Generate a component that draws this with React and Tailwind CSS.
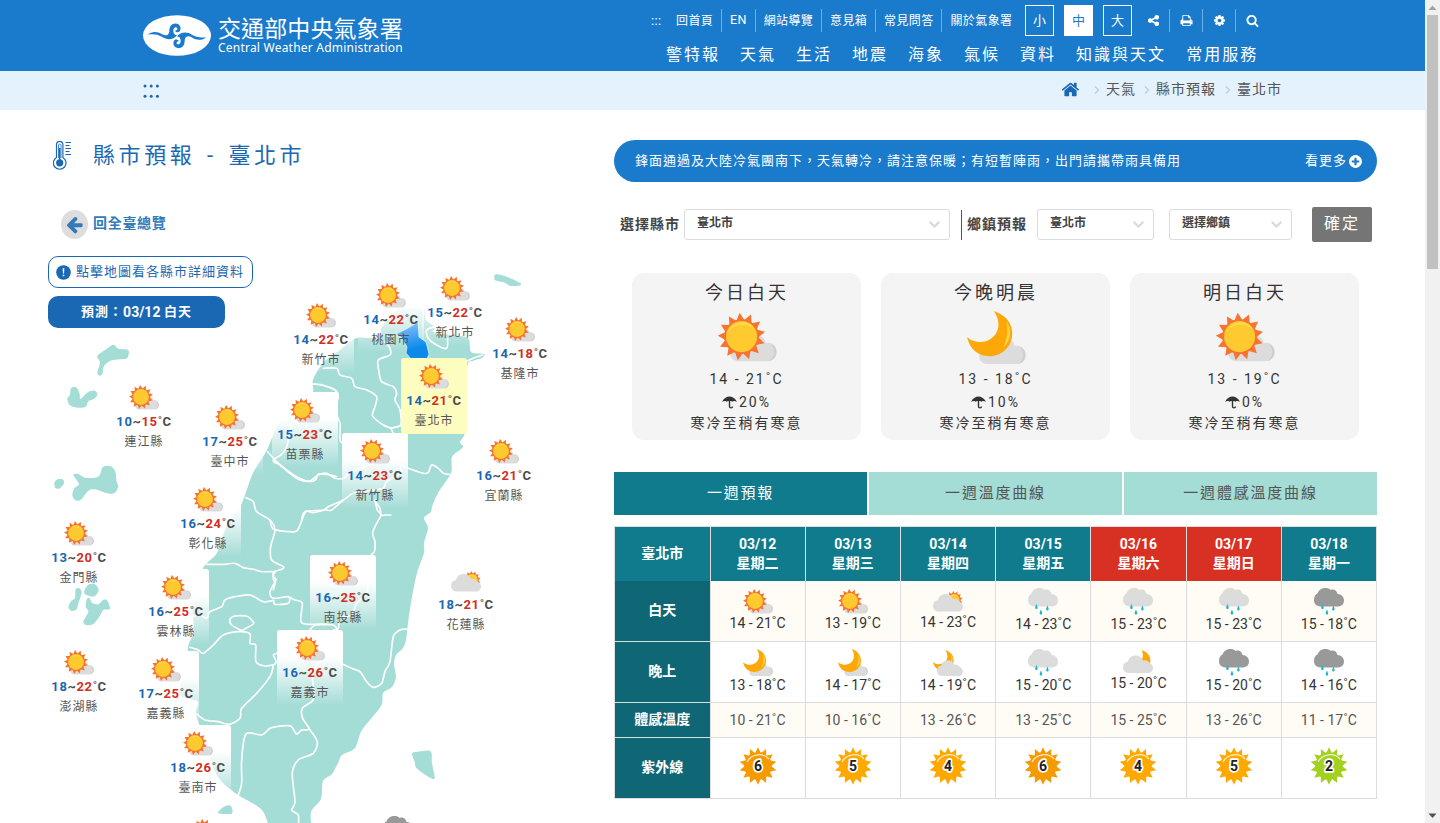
import React from 'react';
import { FiChevronDown } from 'react-icons/fi';

const ICONS = {
  share: 'M1344 1024q133 0 226.5 93.5t93.5 226.5-93.5 226.5-226.5 93.5-226.5-93.5-93.5-226.5q0-12 2-34l-360-180q-92 86-218 86-133 0-226.5-93.5t-93.5-226.5 93.5-226.5 226.5-93.5q126 0 218 86l360-180q-2-22-2-34 0-133 93.5-226.5t226.5-93.5 226.5 93.5 93.5 226.5-93.5 226.5-226.5 93.5q-126 0-218-86l-360 180q2 22 2 34t-2 34l360 180q92-86 218-86z',
  print: 'M448 1536h896v-256h-896v256zm0-640h896v-384h-160q-40 0-68-28t-28-68v-160h-640v640zm1152 64q0-26-19-45t-45-19-45 19-19 45 19 45 45 19 45-19 19-45zm128 0v416q0 13-9.5 22.5t-22.5 9.5h-224v160q0 40-28 68t-68 28h-960q-40 0-68-28t-28-68v-160h-224q-13 0-22.5-9.5t-9.5-22.5v-416q0-79 56.5-135.5t135.5-56.5h64v-544q0-40 28-68t68-28h672q40 0 88 20t76 48l152 152q28 28 48 76t20 88v256h64q79 0 135.5 56.5t56.5 135.5z',
  cog: 'M1152 896q0-106-75-181t-181-75-181 75-75 181 75 181 181 75 181-75 75-181zm512-109v222q0 12-8 23t-20 13l-185 28q-19 54-39 91 35 50 107 138 10 12 10 25t-9 23q-27 37-99 108t-94 71q-12 0-26-9l-138-108q-44 23-91 38-16 136-29 186-7 28-36 28h-222q-14 0-24.5-8.5t-11.5-21.5l-28-184q-49-16-90-37l-141 107q-10 9-25 9-14 0-25-11-126-114-165-168-7-10-7-23 0-12 8-23 15-21 51-66.5t54-70.5q-27-50-41-99l-183-27q-13-2-21-12.5t-8-23.5v-222q0-12 8-23t19-13l186-28q14-46 39-92-40-57-107-138-10-12-10-24 0-10 9-23 26-36 98.5-107.5t94.5-71.5q13 0 26 10l138 107q44-23 91-38 16-136 29-186 7-28 36-28h222q14 0 24.5 8.5t11.5 21.5l28 184q49 16 90 37l142-107q9-9 24-9 13 0 25 10 129 119 165 170 7 8 7 22 0 12-8 23-15 21-51 66.5t-54 70.5q26 50 41 98l183 28q13 2 21 12.5t8 23.5z',
  search: 'M1216 832q0-185-131.5-316.5t-316.5-131.5-316.5 131.5-131.5 316.5 131.5 316.5 316.5 131.5 316.5-131.5 131.5-316.5zm512 832q0 52-38 90t-90 38q-54 0-90-38l-343-342q-179 124-399 124-143 0-273.5-55.5t-225-150-150-225-55.5-273.5 55.5-273.5 150-225 225-150 273.5-55.5 273.5 55.5 225 150 150 225 55.5 273.5q0 220-124 399l343 343q37 37 37 90z',
  arrow: 'M1664 896v128q0 53-32.5 90.5t-84.5 37.5h-704l293 294q38 36 38 90t-38 90l-75 76q-37 37-90 37-52 0-91-37l-651-652q-37-37-37-90 0-52 37-91l651-650q38-38 91-38 52 0 90 38l75 74q38 38 38 91t-38 91l-293 293h704q52 0 84.5 37.5t32.5 90.5z',
  home: 'M1472 992v480q0 26-19 45t-45 19h-384v-384h-256v384h-384q-26 0-45-19t-19-45v-480q0-1 .5-3t.5-3l575-474 575 474q1 2 1 6zm223-69l-62 74q-8 9-21 11h-3q-13 0-21-7l-692-577-692 577q-12 8-24 7-13-2-21-11l-62-74q-8-10-7-23.5t11-21.5l719-599q32-26 76-26t76 26l244 204v-195q0-14 9-23t23-9h192q14 0 23 9t9 23v408l219 182q10 8 11 21.5t-7 23.5z',
  plus: 'M1344 960v-128q0-26-19-45t-45-19h-256v-256q0-26-19-45t-45-19h-128q-26 0-45 19t-19 45v256h-256q-26 0-45 19t-19 45v128q0 26 19 45t45 19h256v256q0 26 19 45t45 19h128q26 0 45-19t19-45v-256h256q26 0 45-19t19-45zm320-64q0 209-103 385.5t-279.5 279.5-385.5 103-385.5-103-279.5-279.5-103-385.5 103-385.5 279.5-279.5 385.5-103 385.5 103 279.5 279.5 103 385.5z',
};

const Icon = ({ name, className }) => (
  <svg viewBox="0 0 1792 1792" fill="currentColor" className={className}>
    <path d={ICONS[name]} />
  </svg>
);

const star = (cx, cy, inner, outer, n, rot = 0) => {
  const pts = [];
  for (let i = 0; i < n * 2; i++) {
    const r = i % 2 ? inner : outer;
    const a = (Math.PI * i) / n - Math.PI / 2 + rot;
    pts.push(`${(cx + r * Math.cos(a)).toFixed(2)},${(cy + r * Math.sin(a)).toFixed(2)}`);
  }
  return pts.join(' ');
};

// Closed or open Catmull-Rom curve through "x,y x,y ..." points.
const curve = (str, closed) => {
  const p = str.trim().split(/\s+/).map((s) => s.split(',').map(Number));
  const n = p.length;
  const at = (i) => (closed ? p[(i + n) % n] : p[Math.max(0, Math.min(n - 1, i))]);
  let d = `M${p[0][0]} ${p[0][1]}`;
  for (let i = 0; i < (closed ? n : n - 1); i++) {
    const [a, b, c, e] = [at(i - 1), at(i), at(i + 1), at(i + 2)];
    const k = 7;
    d += `C${b[0] + (c[0] - a[0]) / k} ${b[1] + (c[1] - a[1]) / k} ${c[0] - (e[0] - b[0]) / k} ${c[1] - (e[1] - b[1]) / k} ${c[0]} ${c[1]}`;
  }
  return closed ? d + 'Z' : d;
};

const SunShape = () => (
  <>
    <polygon points={star(24, 24, 17, 24.3, 13, -0.08)} fill="#f77330" />
    <circle cx="24" cy="24" r="17.6" fill="#f77330" />
    <circle cx="24" cy="24" r="15.8" fill="#ffca30" />
    <path d="M10.5 20C14 8 32 6 37 17C30 9 16 10 10.5 20Z" fill="#ffda50" />
  </>
);
const SmallCloud = ({ y = 0 }) => (
  <g transform={`translate(0 ${y})`}>
    <path d="M20 49a8 8 0 0 1-7-11C15 32 27 22 38 23C45 22 48 27 48.5 30.500C56 29 59.500 34 59.500 39.500C59.500 45 56 49 50 49Z" fill="#dcdcdc" />
    <path d="M54 32C59 37 58 45 52 48.700C57 48 59.500 44.500 59.500 39.500C59.500 36 57.500 33 54 32Z" fill="#cfcfcf" />
  </g>
);
const Moon = () => (
  <>
    <path d="M27.300 0C39 4 46 12 46 23C46 36 36 46 23 46C11 46 3 39 0 26.500C5 31 10 31.500 14 31.500C26 31 32 22 32 14C32 8 30 4 27.300 0Z" fill="#fba808" />
    <path d="M40 10C46 19 45 30 37 37C41 29 42 19 40 10Z" fill="#ffd44a" />
  </>
);
const BigCloud = ({ fill = '#dcdcdc' }) => (
  <path d="M12 41C4 41 0 36 0 29.500C0 23 4 19 10 18C12 10 18 6 25 6C33 6 38 10 40 16C45 14 51 17 53 21C58 23 60 27 60 31C60 37 56 41 50 41Z" fill={fill} />
);

const Weather = ({ kind, className }) => {
  if (kind === 'sun')
    return <svg viewBox="0 0 60 50" className={className}><SmallCloud /><SunShape /></svg>;
  if (kind === 'moon')
    return <svg viewBox="0 0 60 54" className={className}><SmallCloud y={5} /><Moon /></svg>;
  if (kind === 'sunCloud')
    return (
      <svg viewBox="0 0 60 42" className={className}>
        <g transform="translate(24 0) scale(.74)"><SunShape /></g>
        <BigCloud />
      </svg>
    );
  if (kind === 'moonCloudy')
    return (
      <svg viewBox="0 0 60 52" className={className}>
        <g transform="scale(.9)"><Moon /></g>
        <g transform="translate(8 15) scale(.86 .9)"><BigCloud /></g>
      </svg>
    );
  if (kind === 'cloudMoon')
    return (
      <svg viewBox="0 0 60 46" className={className}>
        <path d="M37 0C58 6 60 28 46 42L38 18C41 12 40 5 37 0Z" fill="#fba808" />
        <g transform="translate(0 5)"><BigCloud /></g>
      </svg>
    );
  const dark = kind === 'rainDark';
  return (
    <svg viewBox="0 0 60 53" className={className}>
      <path d="M13 37C4 36 0 31 0 24C0 17 3 12 7 11C10 3 16 0 23 0C27 0 31 1 33 4C40 1 46 6 47 12C55 12 60 18 60 25C60 32 56 36 49 37Z" fill={dark ? '#999' : '#dcdcdc'} />
      <g fill="#17b8cf">
        <path d="M17 32C13 40 14 42 17 42S20 39 17 32Z" />
        <path d="M39 35C35 43 36 45 39 45S42 42 39 35Z" />
        <path d="M26 43C22 51 23 53 26 53S29 51 26 43Z" />
      </g>
    </svg>
  );
};

const UV = ({ value }) => {
  const color = value >= 6 ? '#f59a00' : value >= 3 ? '#ffa800' : '#a4d020';
  return (
    <svg viewBox="0 0 38 38" className="h-[38px] w-[38px]">
      <polygon points={star(19, 19, 13, 18.8, 14)} fill={color} />
      <circle cx="19" cy="19" r="13.7" fill={color} />
      <path d="M8 15C12 7 24 5 30 12" fill="none" stroke="#fff" strokeOpacity=".8" strokeWidth="1.2" />
      <text x="19" y="24" textAnchor="middle" fontFamily="Roboto, sans-serif" fontWeight="700" fontSize="14" fill="#222" stroke="#fff" strokeWidth="3.5" strokeLinejoin="round" paintOrder="stroke">{value}</text>
    </svg>
  );
};

const COAST =
  '395,312 404,308 423,309 426,320 435,327 433,332 450,335 468,338 471,352 484,354 482,358 473,361 467,368 466,428 460,442 463,447 452,457 451,473 438,493 432,507 431,512 424,518 428,528 424,543 424,553 417,573 412,597 408,623 406,640 403,648 396,655 394,664 396,677 392,687 383,693 381,706 362,730 355,748 342,755 338,763 332,774 323,781 321,799 311,812 309,835 275,835 262,810 238,795 223,783 215,772 210,757 204,740 199,724 196,713 198,702 190,699 180,695 181,683 188,670 188,647 194,630 192,603 200,590 203,568 217,553 225,530 233,517 242,503 253,473 267,450 278,425 293,415 305,400 313,392 313,380 323,363 340,350 357,338 379,338 382,327';

const ISLANDS = [
  [280, 260, '647,43 680,50 722,70 715,77 690,77 675,68 645,60'],
  [40, 330, '172,78 195,60 220,44 235,56 265,60 262,84 240,88 212,92 192,108 188,130 180,137 172,128 180,98'],
  [40, 330, '82,205 90,195 93,175 108,172 118,188 122,207 143,187 165,182 172,195 160,208 145,214 137,230 112,233 88,224'],
  [40, 330, '43,460 52,448 68,448 72,460 60,475 46,474'],
  [40, 330, '100,435 115,432 135,443 175,440 188,412 210,408 225,422 230,455 235,470 222,490 195,488 165,478 145,482 122,510 105,510 97,495 103,475 117,462'],
  [40, 560, '107,87 120,86 125,100 115,130 110,148 95,153 85,142 92,125 105,115'],
  [40, 560, '133,92 145,74 165,73 176,90 168,105 155,110 135,102'],
  [40, 560, '140,118 148,114 158,130 175,133 190,119 202,122 210,147 190,150 178,170 160,192 138,195 130,185 145,155 137,140'],
  [40, 560, '535,760 545,745 565,736 575,742 575,761'],
  [270, 500, '426,760 445,755 482,754 486,790 494,835 475,830 440,805 434,785'],
];

const BORDERS = [
  [280, 260, '315,245 330,265 330,285 295,300 296,330 305,365 340,380 350,400 345,420 360,450 362,495 335,505 340,520'],
  [280, 260, '130,325 170,325 180,345 215,355 225,380 260,390 290,410 285,440 278,468 310,495 335,505'],
  [280, 260, '98,372 130,376 165,390 175,410 165,450 180,490 182,545 220,555'],
  [280, 260, '335,505 362,497'],
  [280, 260, '465,200 440,210 445,235 470,255 500,265 503,235'],
  [280, 260, '540,312 580,295 608,285'],
  [280, 260, '445,290 430,275 436,245'],
  [40, 330, '683,365 710,395 740,420 770,440 810,455 828,448 835,432 870,435 890,440'],
  [280, 260, '50,385 20,560 -20,600 0,615 30,640 60,660 90,663 115,645 140,640 165,655 190,655 210,640 265,615 330,605 390,627 430,640 445,637 455,615 475,625 490,640 508,643'],
  [280, 260, '65,780 75,755 130,750 145,740 190,720 220,700 280,690 310,685 320,665 360,640 362,625'],
  [280, 260, '285,725 300,745 303,765 315,765 333,765'],
  [270, 500, '315,0 322,30 333,45 320,70 308,100 315,125 313,155 303,168 295,240 290,280 260,310 250,335 235,350 210,350 205,385 190,390'],
  [270, 500, '0,60 12,88 75,95 90,75 107,35 130,38 165,30 185,30 220,0'],
  [40, 330, '618,503 640,515 650,545 690,570 705,600 692,650 695,690 730,710 725,718 705,725 700,745 705,760 700,780'],
  [40, 330, '500,703 550,703 585,700 610,713 640,718 665,725 705,725'],
  [40, 560, '700,35 700,50 708,60 690,95 700,115 745,110 745,130 705,133 700,122 670,125 630,105 585,110 555,120 545,140 510,155 500,175 480,165 455,170'],
  [40, 560, '745,110 765,120 787,130 785,188 850,193 880,195 890,205'],
  [40, 560, '810,210 825,195 860,193'],
  [40, 560, '450,262 475,270 490,280 520,255 550,225 600,215 630,222 630,250 647,255 648,305 675,318 705,312 707,300 700,285 712,280'],
  [40, 560, '605,212 575,195 570,178 585,168 620,168 635,180 640,192 605,212'],
  [40, 560, '700,318 690,350 650,400 605,445 600,475 568,493 535,485 495,480 468,460'],
  [40, 560, '595,705 605,670 605,600 618,522 665,525 690,505 710,500 740,497 755,500 770,522 785,510 808,507 788,475 787,445 820,420 820,380 818,350 835,310 880,290 900,300 905,310 935,325 960,335 980,365 1000,382 1025,370 1035,335 1050,305 1060,230 1080,210 1100,207'],
  [40, 560, '808,507 832,545 820,580 775,600 757,640 765,725 755,750 775,765 775,800'],
];

const CITIES = [
  ['新竹市', 14, 22, 288, 297, 'fade'], ['新北市', 15, 22, 422, 270, 'fade'],
  ['基隆市', 14, 18, 487, 311, 'fade'], ['連江縣', 10, 15, 111, 379, ''], ['臺中市', 17, 25, 197, 399, 'fade'],
  ['苗栗縣', 15, 23, 272, 392, 'fade'], ['新竹縣', 14, 23, 342, 433, 'fade'],
  ['宜蘭縣', 16, 21, 471, 433, 'fade'], ['彰化縣', 16, 24, 175, 481, 'fade'], ['金門縣', 13, 20, 46, 515, ''],
  ['雲林縣', 16, 25, 143, 569, 'fade'], ['南投縣', 16, 25, 310, 555, 'fade'], ['花蓮縣', 18, 21, 433, 562, 'fade', 'sunCloud'],
  ['澎湖縣', 18, 22, 46, 644, ''], ['嘉義縣', 17, 25, 133, 651, 'fade'], ['嘉義市', 16, 26, 277, 630, 'fade'],
  ['臺南市', 18, 26, 165, 725, 'fade'],
];
const CITY_BG = {
  '': '',
  fade: 'bg-linear-to-b from-white from-35% to-white/0',
  active: 'bg-[#fcfdbf]',
};

// Map pins are placed on a canvas whose origin is (48, 256) of the page.
const City = ({ c: [name, lo, hi, x, y, bg, kind = 'sun'] }) => (
  <div className={`absolute flex h-[76px] w-[66px] flex-col items-center rounded-[3px] pt-[6px] ${CITY_BG[bg]}`} style={{ left: x - 48, top: y - 256 }}>
    <div className="flex h-[27px] items-start">
      <Weather kind={kind} className={kind === 'sunCloud' ? 'mt-[3px] w-[30px]' : 'w-[30px]'} />
    </div>
    <div className="flex h-[20px] items-center text-[13px] font-bold tracking-[0.6px] whitespace-nowrap text-[#4a4a4a]">
      <span className="text-[#1a68b3]">{lo}</span>~<span className="text-[#d32e23]">{hi}</span>˚C
    </div>
    <div className="text-[12px] leading-[20px] tracking-[1px] text-[#555]">{name}</div>
  </div>
);

const MapArea = () => (
  <div className="relative h-[567px] overflow-hidden">
    <svg viewBox="48 256 566 567" className="absolute inset-0 h-[567px] w-[566px]">
      <defs>
        <linearGradient id="tp" x1="0" y1="0" x2="0.2" y2="1">
          <stop offset="0.1" stopColor="#82bffa" />
          <stop offset="0.8" stopColor="#0c8aea" />
        </linearGradient>
      </defs>
      <g fill="#a4dcd6">
        <path d={curve(COAST, true)} />
        {ISLANDS.map(([x, y, p], i) => (
          <path key={i} d={curve(p, true)} transform={`translate(${x} ${y}) scale(.3333)`} />
        ))}
      </g>
      <g fill="none" stroke="#fff" strokeWidth="5" strokeLinejoin="round" strokeLinecap="round">
        {BORDERS.map(([x, y, p], i) => (
          <path key={i} d={curve(p)} transform={`translate(${x} ${y}) scale(.3333)`} />
        ))}
      </g>
    </svg>
    {CITIES.map((c) => <City key={c[0]} c={c} />)}
    <div className="absolute top-[21px] left-[310px] h-[76px] w-[66px] bg-linear-to-b from-white from-35% to-white/0" />
    <svg viewBox="48 256 566 567" className="pointer-events-none absolute inset-0 h-[567px] w-[566px]">
      <path d="M418 322L419 337L426 342L429 354L427 359H411L406 353L407 347L401 337L396 334L408 328Z" fill="url(#tp)" stroke="#fff" strokeWidth="0.6" />
    </svg>
    <City c={['桃園市', 14, 22, 358, 277, '']} />
    <City c={['臺北市', 14, 21, 401, 358, 'active']} />
    <div className="absolute top-[563px] left-[143px]"><Weather kind="sun" className="w-[30px]" /></div>
    <div className="absolute top-[560px] left-[335px]"><Weather kind="rainDark" className="w-[30px]" /></div>
    <div className="relative flex h-8 w-[205px] items-center rounded-[10px] border border-[#1a68b3] bg-white pl-[7px] text-[13px] tracking-[1px] whitespace-nowrap text-[#1a68b3]">
      <svg viewBox="0 0 14 14" className="mr-[5px] h-[15px] w-[15px] shrink-0">
        <circle cx="7" cy="7" r="6.8" fill="#1a68b3" />
        <path d="M6.200 3H7.800L7.500 8H6.500Z M6.300 9.200H7.700V10.600H6.300Z" fill="#fff" />
      </svg>
      點擊地圖看各縣市詳細資料
    </div>
    <div className="relative mt-2 flex h-8 w-[177px] items-center justify-center rounded-[10px] bg-[#1a68b3] text-[14px] font-bold whitespace-nowrap text-white">
      <span className="text-[13px] tracking-[1px]">預測：</span>03/12&nbsp;<span className="text-[13px] tracking-[1px]">白天</span>
    </div>
  </div>
);

const LOGO_CURL =
  'M53 102C65 92 82 92 96 101C108 108 117 104 118 92C118 78 124 69 137 69C149 70 155 80 150 91C147 98 136 96 135 89C139 91 143 88 142 83C138 77 129 82 130 93C131 101 135 104 141 104C130 119 110 119 96 109C82 100 68 100 53 102Z';

const Header = () => (
  <header className="flex h-[71px] bg-[#1a7acb] pl-[143px] text-white">
    <div className="flex w-[508px] items-center gap-[7px]">
      <svg viewBox="39 44 204 122" className="h-[41px] w-[68px] shrink-0">
        <ellipse cx="141" cy="105" rx="102" ry="61" fill="#fff" />
        <g fill="#1a7acb">
          <path d={LOGO_CURL} />
          <path transform="rotate(180 141 106)" d={LOGO_CURL} />
        </g>
      </svg>
      <div className="-mt-[1px] whitespace-nowrap">
        <div className="font-['Noto_Sans_CJK_TC',sans-serif] text-[23px] leading-[25px] tracking-[0.1px]">交通部中央氣象署</div>
        <div className="font-['Noto_Sans',sans-serif] text-[12px] leading-[16px] tracking-[0.22px]">Central Weather Administration</div>
      </div>
    </div>
    <div className="flex flex-col whitespace-nowrap">
      <div className="flex h-[41px] items-center text-[12px] tracking-[0.4px]">
        <span className="w-[17px] text-[13px]">:::</span>
        <div className="flex h-[23px] items-center *:flex *:h-full *:items-center *:border-r *:border-[#6ab1ea] *:pr-[7.800px] *:pl-2">
          <span>回首頁</span><span className="text-[12.5px]">EN</span><span>網站導覽</span><span>意見箱</span><span>常見問答</span>
          <span className="border-r-0!">關於氣象署</span>
        </div>
        <div className="ml-[5px] flex gap-[10px] *:flex *:h-[31px] *:w-[29px] *:items-center *:justify-center *:border *:border-white *:text-[13px]">
          <span>小</span><span className="bg-white text-[#1a7acb]">中</span><span>大</span>
        </div>
        <div className="ml-[5px] flex h-[23px] *:flex *:h-full *:w-[33px] *:items-center *:justify-center *:border-r *:border-[#6ab1ea]">
          <span><Icon name="share" className="h-[13px] w-[13px]" /></span>
          <span><Icon name="print" className="h-[13px] w-[13px]" /></span>
          <span><Icon name="cog" className="h-[13px] w-[13px]" /></span>
          <span className="border-r-0!"><Icon name="search" className="h-[13px] w-[13px]" /></span>
        </div>
      </div>
      <nav className="flex gap-5 pl-[15px] text-[16px] leading-[28px] tracking-[2px]">
        {['警特報', '天氣', '生活', '地震', '海象', '氣候', '資料', '知識與天文', '常用服務'].map((t) => <span key={t}>{t}</span>)}
      </nav>
    </div>
  </header>
);

const Gt = () => (
  <svg viewBox="0 0 6 8" className="h-[8px] w-[6px]"><path d="M1 .5L4.500 4L1 7.500" fill="none" stroke="#c4cbd2" strokeWidth="1.3" /></svg>
);

const Breadcrumb = () => (
  <div className="flex h-[39px] items-center bg-[#e4f2fe] pr-[143px] pb-[2px] pl-[143px] text-[14px] tracking-[1px] whitespace-nowrap text-[#555]">
    <svg viewBox="0 0 17 14" className="mt-[3px] h-[14px] w-[17px]" fill="#1a68b3">
      {[2, 8.2, 14.4].map((x) => <g key={x}><circle cx={x} cy="2" r="1.5" /><circle cx={x} cy="12.3" r="1.5" /></g>)}
    </svg>
    <Icon name="home" className="mr-[14px] ml-auto h-[19px] w-[19px] text-[#1a68b3]" />
    <Gt /><span className="mr-[8px] ml-[6px]">天氣</span>
    <Gt /><span className="mr-[9px] ml-[6px]">縣市預報</span>
    <Gt /><span className="ml-[6px]">臺北市</span>
  </div>
);

const Left = () => (
  <section className="w-[566px]">
    <div className="flex h-[92px] items-start pt-[29px] pl-[5px]">
      <svg viewBox="0 0 18 29" className="mt-[2px] h-[29px] w-[18px]" fill="none" stroke="#1a68b3" strokeWidth="1.2">
        <path d="M3.500 16.500V3.500A3.200 3.200 0 0 1 9.900 3.500V16.500A6.300 6.300 0 1 1 3.500 16.500Z" />
        <path d="M5.500 17V4A1.300 1.300 0 0 1 8 4V17" strokeWidth=".8" />
        <circle cx="6.700" cy="21.800" r="3.600" fill="#1a68b3" stroke="none" />
        <path d="M6.700 7V20" strokeWidth="1.500" />
        <path d="M12.500 1.500H18M12.500 4.500H16.500M12.500 7.500H18M12.500 10.500H16.500M12.500 13.500H18" strokeWidth="1.100" />
      </svg>
      <h1 className="ml-[22px] text-[22px] leading-[34px] tracking-[3.6px] whitespace-nowrap text-[#1a68b3]">縣市預報<span className="inline-block w-[33px] text-center">-</span>臺北市</h1>
    </div>
    <div className="flex h-[54px] items-start pt-[8px] pl-[13px] text-[#337ab7]">
      <span className="flex h-[29px] w-[27px] items-center justify-center rounded-[50%] bg-[#ddd] pr-[1px]"><Icon name="arrow" className="h-[19px] w-[19px]" /></span>
      <span className="ml-[5px] text-[14px] leading-[27px] font-bold tracking-[0.7px]">回全臺總覽</span>
    </div>
    <MapArea />
  </section>
);

const Select = ({ children, className }) => (
  <div className={`flex h-[31px] items-center justify-between rounded-[3px] border border-[#dcdcdc] bg-white pr-[6px] pl-[12px] text-[12px] font-bold text-[#444] ${className}`}>
    <span className="-mt-[3px]">{children}</span>
    <FiChevronDown className="h-[17px] w-[17px] text-[#dadada]" strokeWidth={3} />
  </div>
);

const Umbrella = () => (
  <svg viewBox="0 0 14 12" className="mr-[2px] h-[13px] w-[15px]">
    <path d="M0 5.200C2 1.800 4.500 .5 7 .5S12 1.800 14 5.200C12 4.300 10.500 4.300 9.500 5.200C8.500 4.500 5.500 4.500 4.500 5.200C3.500 4.300 2 4.300 0 5.200Z" fill="#333" />
    <path d="M7 4V9.800C7 11.400 9.800 11.400 9.800 9.800" fill="none" stroke="#333" strokeWidth="1.300" />
  </svg>
);

const CARDS = [
  ['今日白天', 'sun', '14 - 21˚C', '20%'],
  ['今晚明晨', 'moon', '13 - 18˚C', '10%'],
  ['明日白天', 'sun', '13 - 19˚C', '0%'],
];

const DAYS = [
  ['03/12', '二', 'sun', '14 - 21', 'moon', '13 - 18', '10 - 21', 6],
  ['03/13', '三', 'sun', '13 - 19', 'moon', '14 - 17', '10 - 16', 5],
  ['03/14', '四', 'sunCloud', '14 - 23', 'moonCloudy', '14 - 19', '13 - 26', 4],
  ['03/15', '五', 'rain', '14 - 23', 'rain', '15 - 20', '13 - 25', 6],
  ['03/16', '六', 'rain', '15 - 23', 'cloudMoon', '15 - 20', '15 - 25', 4],
  ['03/17', '日', 'rain', '15 - 23', 'rainDark', '15 - 20', '13 - 26', 5],
  ['03/18', '一', 'rainDark', '15 - 18', 'rainDark', '14 - 16', '11 - 17', 2],
];
const ICON_BOX = {
  sun: 'h-[28px] pt-[2px]',
  moon: 'h-[29px] pt-[1px]',
  sunCloud: 'h-[27px] pt-[4px]',
  moonCloudy: 'h-[29px] pt-[2px]',
  cloudMoon: 'h-[27px] pt-[2px]',
  rain: 'h-[29px] pt-[1px]',
  rainDark: 'h-[29px] pt-[1px]',
};

const Head = ({ children, className = 'bg-[#0f6674]' }) => (
  <div className={`flex items-center justify-center pb-[2px] text-[14px] font-bold text-white ${className}`}>{children}</div>
);
const Cell = ({ kind, t }) => (
  <div className="flex flex-col items-center pt-[6px] text-[14px] text-[#333]">
    <div className={ICON_BOX[kind]}><Weather kind={kind} className="w-[30px]" /></div>
    <span className="leading-[17px] whitespace-nowrap">{t}˚C</span>
  </div>
);

const Right = () => (
  <section className="w-[763px] pt-[30px]">
    <div className="flex h-[42px] items-center rounded-[21px] bg-[#1a7acb] pr-[14px] pl-[21px] text-[13px] tracking-[1px] whitespace-nowrap text-white">
      <span className="grow">鋒面通過及大陸冷氣團南下，天氣轉冷，請注意保暖；有短暫陣雨，出門請攜帶雨具備用</span>
      <span>看更多</span>
      <Icon name="plus" className="ml-[1px] h-[15px] w-[15px]" />
    </div>
    <div className="mt-[25px] flex h-[35px] items-center pl-[6px] text-[14px] font-bold tracking-[1px] whitespace-nowrap text-[#444]">
      <span className="w-[64px]">選擇縣市</span>
      <Select className="w-[266px] tracking-normal">臺北市</Select>
      <span className="ml-[11px] h-[30px] w-px bg-[#555]" />
      <span className="ml-[5px] w-[70px]">鄉鎮預報</span>
      <Select className="w-[117px] tracking-normal">臺北市</Select>
      <Select className="ml-[15px] w-[123px] tracking-normal">選擇鄉鎮</Select>
      <button className="ml-[20px] h-[35px] w-[60px] rounded-[2px] bg-[#757575] pb-[2px] text-[16px] font-normal tracking-[2px] text-white">確定</button>
    </div>
    <div className="mt-[31px] flex gap-5 pl-[18px]">
      {CARDS.map(([title, kind, temp, rain]) => (
        <div key={title} className="flex h-[167px] w-[229px] flex-col items-center rounded-xl bg-[#f4f4f4] pt-[6px] text-[14px] tracking-[2px] text-[#333]">
          <div className="pl-[1px] text-[18px] leading-[28px] tracking-[3px]">{title}</div>
          <div className="flex h-[61px] items-center justify-center pt-[1px] pl-[1px]"><Weather kind={kind} className="w-[59px]" /></div>
          <div className="leading-[23px]">{temp}</div>
          <div className="flex items-center leading-[23px]"><Umbrella />{rain}</div>
          <div className="leading-[19px]">寒冷至稍有寒意</div>
        </div>
      ))}
    </div>
    <div className="mt-8 grid h-[43px] grid-cols-3 gap-[2px] text-[15px] tracking-[1.8px] *:flex *:items-center *:justify-center *:pb-[1px]">
      <div className="bg-[#107b8d] text-white">一週預報</div>
      <div className="bg-[#a4dcd6] text-[#555]">一週溫度曲線</div>
      <div className="bg-[#a4dcd6] text-[#555]">一週體感溫度曲線</div>
    </div>
    <div className="mt-[11px] grid grid-flow-col grid-cols-[94.5px_repeat(7,1fr)] grid-rows-[53px_60px_60px_34px_60px] gap-px border border-[#ddd] bg-[#ddd]">
      <Head className="-mb-px bg-[#107b8d]">臺北市</Head>
      <Head>白天</Head>
      <Head>晚上</Head>
      <Head>體感溫度</Head>
      <Head>紫外線</Head>
      {DAYS.map(([d, w, k1, t1, k2, t2, f, uv]) => (
        <React.Fragment key={d}>
          <div className={`-mb-px flex flex-col items-center justify-center text-[14px] leading-[19px] font-bold text-white ${w === '六' || w === '日' ? 'bg-[#d93024]' : 'bg-[#107b8d]'}`}>
            <span>{d}</span><span>星期{w}</span>
          </div>
          <div className="bg-[#fffcf5]"><Cell kind={k1} t={t1} /></div>
          <div className="bg-white"><Cell kind={k2} t={t2} /></div>
          <div className="flex items-center justify-center bg-[#fffcf5] text-[14px] whitespace-nowrap text-[#555]">{f}˚C</div>
          <div className="flex items-center justify-center bg-white pb-[4px]"><UV value={uv} /></div>
        </React.Fragment>
      ))}
    </div>
  </section>
);

export default function App() {
  return (
    <div className="flex h-[823px] w-[1440px] overflow-hidden bg-white font-[Roboto,'Noto_Sans_CJK_TC',sans-serif]">
      <div className="w-[1425px]">
        <Header />
        <Breadcrumb />
        <main className="flex pl-12">
          <Left />
          <Right />
        </main>
      </div>
      <div className="flex w-[15px] flex-col items-center bg-[#f1f1f1]">
        <svg viewBox="0 0 15 15" className="h-[15px] w-[15px]"><path d="M3.500 10H11.500L7.500 5.500Z" fill="#a3a3a3" /></svg>
        <div className="h-[254px] w-[11px] bg-[#c1c1c1]" />
        <svg viewBox="0 0 15 15" className="mt-auto h-[15px] w-[15px]"><path d="M3.500 5.500H11.500L7.500 10Z" fill="#505050" /></svg>
      </div>
    </div>
  );
}
